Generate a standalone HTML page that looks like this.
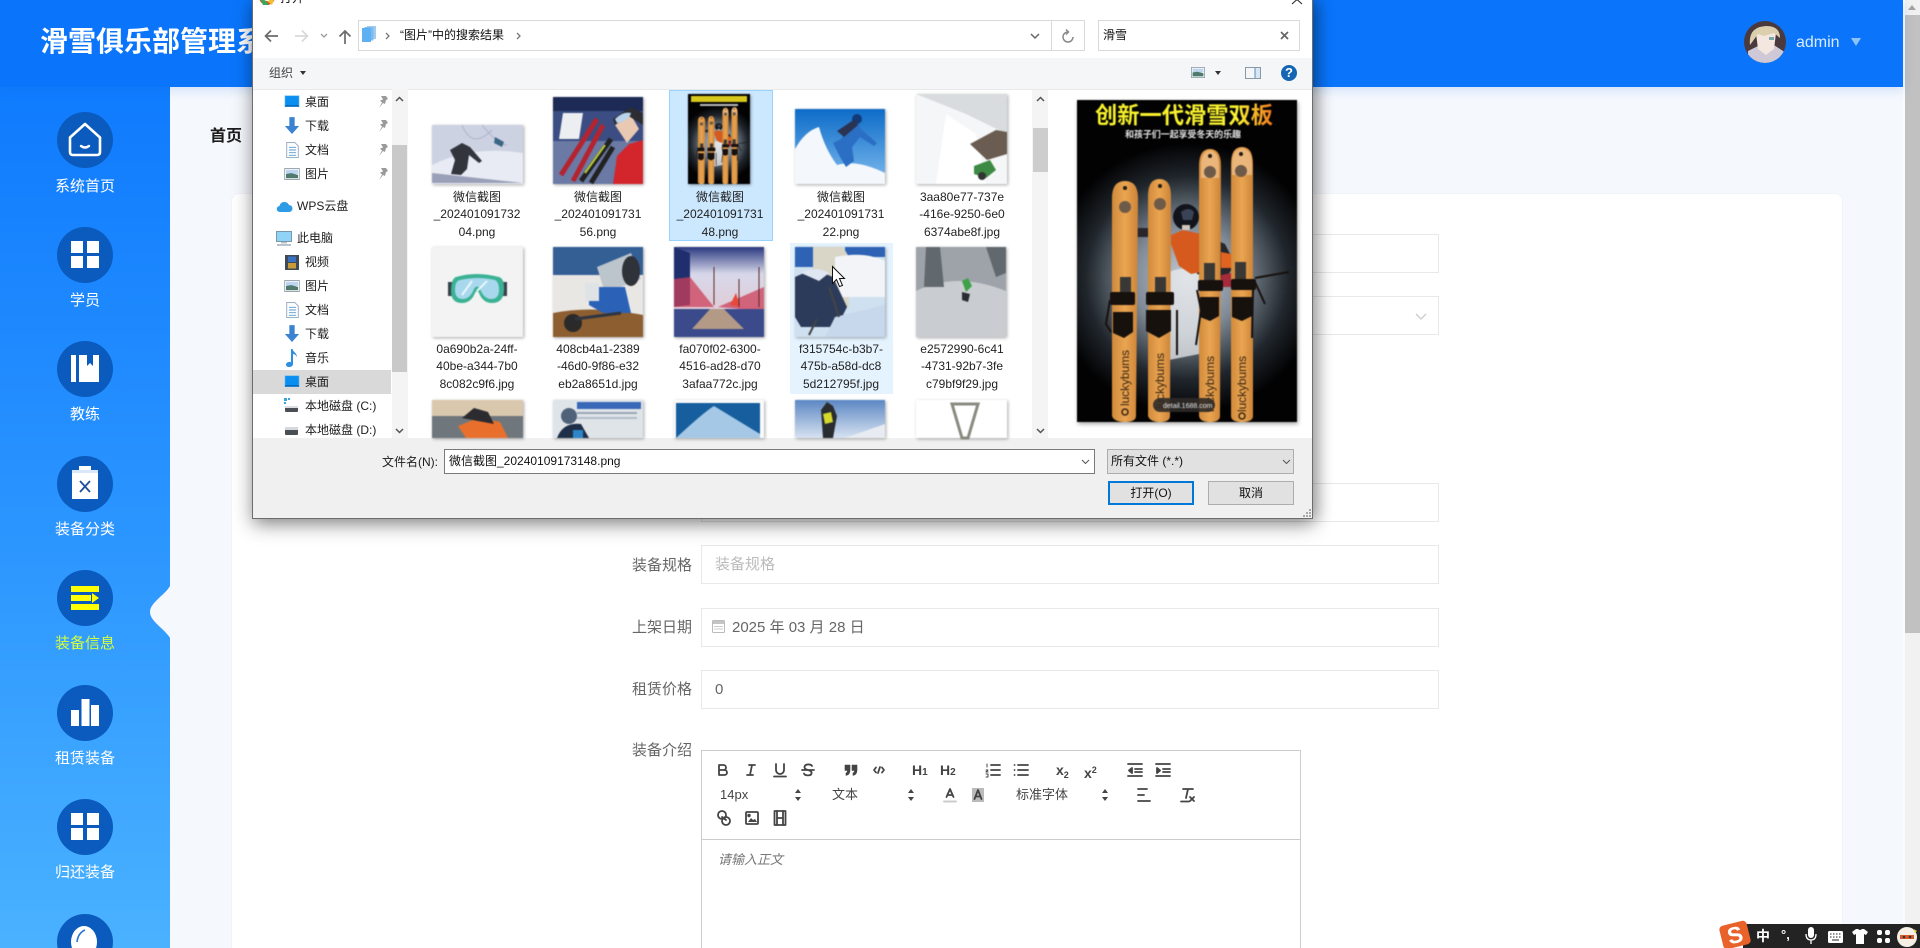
<!DOCTYPE html>
<html lang="zh-CN"><head><meta charset="utf-8"><title>滑雪俱乐部管理系统</title>
<style>
*{box-sizing:border-box}
html,body{margin:0;padding:0;width:1920px;height:948px;overflow:hidden;background:#f5f8fd;font-family:"Liberation Sans","Noto Sans CJK SC",sans-serif}
#root{position:relative;width:1920px;height:948px;overflow:hidden;background:#f5f8fd}
.a{position:absolute}
svg{display:block;overflow:visible}
.c{position:absolute;left:57px;width:56px;height:56px;border-radius:50%;background:#0a5bbd}
.l{position:absolute;left:0;width:170px;text-align:center;font-size:15px;line-height:20px;color:#fff}
.ip{position:absolute;left:701px;width:738px;height:39px;border:1px solid #e8e8e8;background:#fff;font-size:15px;line-height:38px;padding-left:13px;color:#666}
.lb{position:absolute;left:592px;width:100px;text-align:right;font-size:15px;line-height:20px;color:#666}
.i{position:absolute;width:18px;height:18px;fill:none;stroke:#444;stroke-width:1.8;stroke-linecap:round;stroke-linejoin:round}
.tb{position:absolute;font-size:13px;line-height:18px;color:#444}
#dlg{position:absolute;left:252px;top:-2px;width:1061px;height:521px;background:#fff;border:1px solid #6d6d6d;box-shadow:0 6px 18px rgba(0,0,0,.38),6px 0 14px rgba(0,0,0,.2);overflow:hidden;z-index:5}
#dlg .in{position:absolute;left:-253px;top:1px;width:1920px;height:948px}
.n{position:absolute;font-size:12px;line-height:24px;height:24px;color:#1c1c1c;white-space:nowrap}
.f{position:absolute;width:120px;text-align:center;font-size:12px;line-height:17.3px;color:#222}
.t{position:absolute;box-shadow:1px 1px 3px rgba(0,0,0,.35);filter:blur(.5px)}
.pin{position:absolute;left:378px;width:10px;height:12px;fill:#9a9a9a}
</style></head><body>
<div id="root">
<svg width="0" height="0" style="position:absolute"><defs>
<symbol id="grid" viewBox="0 0 28 28"><path fill="#fff" d="M0 0h12v12H0zM16 0h12v12H16zM0 15h12v12H0zM16 15h12v12H16z"/></symbol>
<symbol id="mon" viewBox="0 0 20 18"><rect x="1" y="1" width="18" height="14" fill="#0a8ef0" stroke="#6bb8ee" stroke-width=".8"/><rect x="1" y="13" width="18" height="2" fill="#0868b8"/></symbol>
<symbol id="dl" viewBox="0 0 18 20"><path fill="#3b82d0" d="M6 0h6v10h5l-8 9-8-9h5z"/></symbol>
<symbol id="doc" viewBox="0 0 14 18"><path fill="#fff" stroke="#8fa6bd" d="M.5.5h9l4 4v13H.5z"/><path stroke="#5a9bd0" d="M3 6h8M3 9h8M3 12h8M3 15h8"/></symbol>
<symbol id="pic" viewBox="0 0 18 14"><rect x=".5" y=".5" width="17" height="13" fill="#fff" stroke="#8d98a4"/><rect x="2" y="2" width="14" height="5" fill="#bdd5ee"/><path fill="#4d7a6d" d="M2 7l6-1 8 2v4H2z"/></symbol>
<symbol id="pinp" viewBox="0 0 10 12"><path d="M3 0h5l2 3-2 1-1 4-2-1-4 5 3-5.500-2-2 3-1z"/></symbol>
<symbol id="ud" viewBox="0 0 8 14"><path fill="#444" d="M4 1l3 4H1zM4 13L1 9h6z"/></symbol>
<radialGradient id="glow" gradientUnits="userSpaceOnUse" cx="110" cy="178" r="135"><stop offset="0" stop-color="#c5ccd4"/><stop offset=".4" stop-color="#7f8a96"/><stop offset=".75" stop-color="#20262c"/><stop offset="1" stop-color="#020203"/></radialGradient>
<linearGradient id="wood" x1="0" x2="1" y1="0" y2="0"><stop offset="0" stop-color="#d08a3c"/><stop offset=".5" stop-color="#eaa551"/><stop offset="1" stop-color="#cc8438"/></linearGradient>
<linearGradient id="ttl" x1="0" x2="1" y1="0" y2="0"><stop offset="0" stop-color="#f6f02a"/><stop offset=".8" stop-color="#f8f030"/><stop offset="1" stop-color="#f2761e"/></linearGradient>
<symbol id="skis" viewBox="0 0 220 322" preserveAspectRatio="none">
<rect width="220" height="322" fill="#030304"/><rect width="220" height="322" fill="url(#glow)"/>
<path fill="#e9ecef" opacity=".75" d="M92 172q18-8 36 2l2 40-8 40-30 6z"/>
<path fill="#26262c" d="M60 128h12v9H60zM122 132l26 12 10 20-10 16-28-6z"/>
<path fill="#d65a1e" d="M94 135l12-5 18 4v38l-10 2-12-8-8-22z"/><path fill="#e2621f" d="M144 152l10 2v14h-10z"/><path fill="#a52a3a" d="M144 175l10-2v14h-10z"/>
<circle cx="109" cy="117" r="13" fill="#12141c"/><path fill="#3a4356" d="M104 112q8-6 13 0l-2 8-9 0z"/><path fill="#cfc7be" d="M105 125h8v5h-8z"/>
<g fill="url(#wood)"><path d="M35 316V98q0-17 13-17t13 17l-2 218q0 6-11 6t-13-6z"/><path d="M71 316V96q0-17 11.500-17T94 96l-1 220q0 6-10 6t-12-6z"/><path d="M122 316V66q0-17 11-17t11 17l-1 250q0 6-10 6t-11-6z"/><path d="M154 316V64q0-17 11-17t11 17v252q0 6-11 6t-11-6z"/></g>
<g fill="#ecbb84" opacity=".85"><path d="M124 78V66q0-15 9-15t9 15v12zM155 75V64q0-15 10-15t10 15v11z"/></g>
<g fill="#6e5a48"><circle cx="48" cy="107" r="6"/><circle cx="83" cy="104" r="6"/><circle cx="133" cy="72" r="6"/><circle cx="164" cy="71" r="6"/></g>
<g fill="#221a14"><circle cx="48" cy="88" r="2"/><circle cx="83" cy="86" r="2"/><circle cx="133" cy="56" r="2"/><circle cx="164" cy="54" r="2"/></g>
<g fill="#3a3835"><rect x="43" y="177" width="11" height="16"/><rect x="78" y="177" width="11" height="16"/><rect x="127" y="163" width="11" height="17"/><rect x="158" y="162" width="11" height="17"/></g>
<g fill="#17110e"><rect x="33" y="192" width="25" height="13" rx="2"/><rect x="69" y="192" width="28" height="13" rx="2"/><rect x="121" y="180" width="25" height="11" rx="2"/><rect x="154" y="179" width="25" height="11" rx="2"/><path d="M36 212h20v20l-9 6-11-5zM69 210h25v21l-12 7-13-7zM123 197h19v19l-9 5-10-4zM155 197h20v19l-10 5-10-4z"/></g>
<g fill="none" stroke="#17110e" stroke-width="2"><path d="M33 200l-4 24 5 8M100 210v45M120 190l4 20-5 35M178 182l10 22M176 190l-1 48M178 178l34-6"/></g>
</symbol>
</defs></svg>

<!-- header -->
<div class="a" style="left:0;top:0;width:1903px;height:87px;background:#0a75fb;box-shadow:0 3px 10px rgba(30,110,230,.18);z-index:2"></div>
<div class="a" style="left:40px;top:20px;width:300px;height:44px;line-height:44px;font-size:28px;font-weight:700;color:#fff;white-space:nowrap;z-index:3">滑雪俱乐部管理系统</div>
<svg class="a" style="left:1744px;top:21px;z-index:3" width="42" height="42" viewBox="0 0 42 42"><defs><clipPath id="av"><circle cx="21" cy="21" r="21"/></clipPath></defs><g clip-path="url(#av)"><rect width="42" height="42" fill="#4a3a3e"/><path fill="#cfc8d6" d="M4 30l12-6 14 0 12 8v10H4z"/><path fill="#f4e7e0" d="M12 12h20l-2 16-8 6-8-6z"/><path fill="#dccfae" d="M6 24Q4 6 22 5q14 0 14 12l-6-5-10 3-6-2z"/><path fill="#7ba9a8" d="M25 16h5v3h-5z"/></g></svg>
<div class="a" style="left:1796px;top:31px;font-size:16px;line-height:24px;color:#d9ecff;z-index:3">admin</div>
<div class="a" style="left:1851px;top:38px;width:0;height:0;border-left:5.500px solid transparent;border-right:5.500px solid transparent;border-top:8px solid #8fc2fb;z-index:3"></div>

<!-- sidebar -->
<div class="a" style="left:0;top:87px;width:170px;height:861px;background:linear-gradient(#0f7bfe,#2a94ff 50%,#4ab2ff)"></div>
<svg class="a" style="left:145px;top:580px;z-index:1" width="26" height="65" viewBox="0 0 26 65"><path fill="#f5f8fd" d="M26 4C22 14 5 22 5 32S22 50 26 60z"/></svg>
<div class="c" style="top:112px"></div>
<svg class="a" style="left:68px;top:122px" width="34" height="35" viewBox="0 0 34 35"><path fill="none" stroke="#fff" stroke-width="2.600" stroke-linejoin="round" d="M2 15.500L17 2l15 13.500V30q0 3-3 3H5q-3 0-3-3z"/><path fill="none" stroke="#fff" stroke-width="2.400" stroke-linecap="round" d="M13 24q4 3 8 0"/></svg>
<div class="l" style="top:177px">系统首页</div>
<div class="c" style="top:227px"></div><svg class="a" style="left:71px;top:241px" width="28" height="28"><use href="#grid"/></svg>
<div class="l" style="top:291px">学员</div>
<div class="c" style="top:341px"></div>
<svg class="a" style="left:71px;top:355px" width="28" height="27" viewBox="0 0 28 27"><path fill="#fff" d="M0 0h5v27H0zM8 0h8v11l3-3 3 3V0h6v27H8z"/></svg>
<div class="l" style="top:405px">教练</div>
<div class="c" style="top:456px"></div>
<svg class="a" style="left:72px;top:466px" width="26" height="33" viewBox="0 0 26 33"><path fill="#fff" d="M0 4h7V0h12v4h7v29H0z"/><path fill="#dbe7fb" d="M0 4h26v3H0z"/><path fill="none" stroke="#1f4f9a" stroke-width="1.800" d="M8 15l10 11M18 15L8 26"/></svg>
<div class="l" style="top:520px">装备分类</div>
<div class="c" style="top:570px"></div>
<svg class="a" style="left:71px;top:586px" width="28" height="24" viewBox="0 0 28 24"><path fill="#ff0" d="M0 0h28v6H0zM0 9h20v6H0zM21 7l7 5-7 5zM0 18h28v6H0z"/></svg>
<div class="l" style="top:634px;color:#d4ff3c">装备信息</div>
<div class="c" style="top:685px"></div>
<svg class="a" style="left:71px;top:699px" width="28" height="27" viewBox="0 0 28 27"><path fill="#fff" d="M0 11h8v16H0zM10.500 0h8v27h-8zM20 6h8v21h-8z"/></svg>
<div class="l" style="top:749px">租赁装备</div>
<div class="c" style="top:799px"></div><svg class="a" style="left:71px;top:813px" width="28" height="28"><use href="#grid"/></svg>
<div class="l" style="top:863px">归还装备</div>
<div class="c" style="top:914px"></div>
<svg class="a" style="left:71px;top:926px" width="26" height="22" viewBox="0 0 26 22"><ellipse cx="13" cy="16" rx="13" ry="16" fill="#fff"/><path fill="none" stroke="#2a74d0" stroke-width="1.600" d="M6 16Q7 7 14 4"/></svg>

<!-- page -->
<div class="a" style="left:210px;top:126px;font-size:16px;font-weight:700;line-height:22px;color:#1c1c1c">首页</div>
<div class="a" style="left:231px;top:193px;width:1612px;height:780px;background:#fff;border:1px solid #f0f3f8;border-radius:8px"></div>
<div class="ip" style="top:234px"></div>
<div class="ip" style="top:296px"></div>
<svg class="a" style="left:1415px;top:313px" width="12" height="8"><path fill="none" stroke="#ccc" stroke-width="1.300" d="M1 1l5 5 5-5"/></svg>
<div class="ip" style="top:483px"></div>
<div class="lb" style="top:556px">装备规格</div>
<div class="ip" style="top:545px;color:#bbb">装备规格</div>
<div class="lb" style="top:618px">上架日期</div>
<div class="ip" style="top:608px;padding-left:30px">2025 年 03 月 28 日</div>
<svg class="a" style="left:712px;top:620px" width="13" height="13" viewBox="0 0 13 13"><rect x=".5" y=".5" width="12" height="12" rx="1" fill="#fff" stroke="#bbb"/><path fill="#c4c4c4" d="M1 1h11v3H1z"/><path stroke="#ccc" d="M2 6.500h9M2 9h9"/></svg>
<div class="lb" style="top:680px">租赁价格</div>
<div class="ip" style="top:670px">0</div>
<div class="lb" style="top:741px">装备介绍</div>
<div class="a" style="left:701px;top:750px;width:600px;height:210px;border:1px solid #ccc;background:#fff"></div>
<div class="a" style="left:701px;top:839px;width:600px;height:1px;background:#ccc"></div>
<div class="a" style="left:718px;top:850px;font-size:13px;line-height:20px;font-style:italic;color:#777">请输入正文</div>

<!-- editor toolbar -->
<svg class="i" style="left:714px;top:761px" viewBox="0 0 18 18"><path d="M5 4h4.500a2.500 2.500 0 0 1 0 5H5zM5 9h5.500a2.500 2.500 0 0 1 0 5H5z"/></svg>
<svg class="i" style="left:742px;top:761px" viewBox="0 0 18 18"><path d="M7 4h6M5 14h6M10 4l-2 10"/></svg>
<svg class="i" style="left:771px;top:761px" viewBox="0 0 18 18"><path d="M5 3v6a4 4 0 0 0 8 0V3M3 15.500h12"/></svg>
<svg class="i" style="left:799px;top:761px" viewBox="0 0 18 18"><path d="M13 5C12 3 6 2.500 5.500 6 5.200 8 7.500 8.500 9 9c2 .6 4 1.200 3.500 3.500C12 15 6 15 5 12.500M3 9h12"/></svg>
<svg class="i" style="left:842px;top:761px;fill:#444;stroke-width:.6" viewBox="0 0 18 18"><path d="M3 4h5v5c0 3-1.500 5-4 5.500V12c1-.3 1.500-1 1.500-2.500H3zM10 4h5v5c0 3-1.500 5-4 5.500V12c1-.3 1.500-1 1.500-2.500H10z"/></svg>
<svg class="i" style="left:870px;top:761px" viewBox="0 0 18 18"><path d="M6 6.500L4 9l2 2.500M12 6.500L14 9l-2 2.500M10 6l-2 6"/></svg>
<div class="tb" style="left:912px;top:761px;font-size:14px;font-weight:700">H<span style="font-size:10px">1</span></div>
<div class="tb" style="left:940px;top:761px;font-size:14px;font-weight:700">H<span style="font-size:10px">2</span></div>
<svg class="i" style="left:984px;top:761px" viewBox="0 0 18 18"><path d="M7 4h9M7 9h9M7 14h9"/><path stroke-width="1" d="M3 3v3M2 9h2l-2 2h2M2 13h2v3H2"/></svg>
<svg class="i" style="left:1012px;top:761px" viewBox="0 0 18 18"><path d="M6 4h10M6 9h10M6 14h10M2.500 4h.1M2.500 9h.1M2.500 14h.1"/></svg>
<div class="tb" style="left:1056px;top:761px;font-size:14px;font-weight:700">x<span style="font-size:9px;vertical-align:-3px">2</span></div>
<div class="tb" style="left:1084px;top:761px;font-size:14px;font-weight:700">x<span style="font-size:9px;vertical-align:5px">2</span></div>
<svg class="i" style="left:1126px;top:761px" viewBox="0 0 18 18"><path d="M2 3h14M9 8h7M9 11h7M2 15h14"/><path fill="#444" d="M6 7L3 9.500 6 12z"/></svg>
<svg class="i" style="left:1154px;top:761px" viewBox="0 0 18 18"><path d="M2 3h14M9 8h7M9 11h7M2 15h14"/><path fill="#444" d="M3 7l3 2.500L3 12z"/></svg>
<div class="tb" style="left:720px;top:786px;font-size:13px">14px</div>
<svg class="a" style="left:794px;top:788px" width="8" height="14"><use href="#ud"/></svg>
<div class="tb" style="left:832px;top:786px">文本</div>
<svg class="a" style="left:907px;top:788px" width="8" height="14"><use href="#ud"/></svg>
<svg class="i" style="left:941px;top:786px" viewBox="0 0 18 18"><path d="M5.500 11L9 3l3.500 8M6.500 9h5"/><path stroke="#ccc" stroke-width="2" d="M3 15.500h12" /></svg>
<svg class="i" style="left:969px;top:786px" viewBox="0 0 18 18"><rect x="3" y="2" width="12" height="14" fill="#bbb" stroke="none"/><path d="M5.500 13L9 4l3.500 9M6.500 10.500h5"/></svg>
<div class="tb" style="left:1016px;top:786px">标准字体</div>
<svg class="a" style="left:1101px;top:788px" width="8" height="14"><use href="#ud"/></svg>
<svg class="i" style="left:1135px;top:786px" viewBox="0 0 18 18"><path d="M3 3h9M3 9h6M3 15h12"/></svg>
<svg class="i" style="left:1178px;top:786px" viewBox="0 0 18 18"><path d="M5 3h10M10 3L8 12M3 15.500h8M12 11l4 4M16 11l-4 4"/></svg>
<svg class="i" style="left:715px;top:809px" viewBox="0 0 18 18"><circle cx="7" cy="6" r="4"/><circle cx="11" cy="12" r="4"/><path d="M7 8l4 3"/></svg>
<svg class="i" style="left:743px;top:809px" viewBox="0 0 18 18"><rect x="3" y="3" width="12" height="12" rx="1"/><path fill="#444" stroke="none" d="M5 13l3-4 2 2 2-1 2 3z"/><circle cx="6" cy="6.500" r=".8" fill="#444"/></svg>
<svg class="i" style="left:771px;top:809px" viewBox="0 0 18 18"><rect x="3.500" y="2" width="11" height="14"/><path d="M6 2v14M12 2v14M6 9h6"/></svg>

<!-- scrollbar -->
<div class="a" style="left:1905px;top:0;width:15px;height:948px;background:#f1f1f1"></div>
<div class="a" style="left:1903px;top:0;width:2px;height:948px;background:#fafbfe"></div>
<div class="a" style="left:1905px;top:15px;width:15px;height:618px;background:#c1c1c1"></div>
<div class="a" style="left:1908px;top:5px;width:0;height:0;border-left:4.500px solid transparent;border-right:4.500px solid transparent;border-bottom:5px solid #a3a3a3"></div>

<!-- dialog -->
<div id="dlg"><div class="in">
<div class="a" style="left:253px;top:58px;width:1060px;height:31px;background:#f5f6f7"></div>
<div class="a" style="left:253px;top:89px;width:1060px;height:1px;background:#e9e9e9"></div>
<!-- title -->
<svg class="a" style="left:259px;top:-11px" width="16" height="16" viewBox="0 0 16 16"><circle cx="8" cy="8" r="8" fill="#e04a35"/><path fill="#f6c02d" d="M8 4h7l1 4-3 8-5-4z"/><path fill="#3aa757" d="M0 8l4 8h6l-3-4z"/><circle cx="8" cy="8" r="3.500" fill="#4a8ef0" stroke="#fff"/></svg>
<div class="a" style="left:280px;top:-9px;font-size:12px;line-height:14px;color:#111">打开</div>
<svg class="a" style="left:1292px;top:-5px" width="11" height="10"><path fill="none" stroke="#222" d="M0 0l10 9M10 0L0 9"/></svg>
<!-- nav bar -->
<svg class="a" style="left:264px;top:29px" width="15" height="14" viewBox="0 0 15 14"><path fill="none" stroke="#6b6b6b" stroke-width="1.700" d="M14 7H2M7 1.500L1.500 7 7 12.500"/></svg>
<svg class="a" style="left:294px;top:29px" width="15" height="14" viewBox="0 0 15 14"><path fill="none" stroke="#d9d9d9" stroke-width="1.700" d="M1 7h12M8 1.500L13.500 7 8 12.500"/></svg>
<svg class="a" style="left:320px;top:33px" width="8" height="6"><path fill="none" stroke="#9a9a9a" stroke-width="1.300" d="M1 1l3 3 3-3"/></svg>
<svg class="a" style="left:338px;top:29px" width="14" height="15" viewBox="0 0 14 15"><path fill="none" stroke="#6b6b6b" stroke-width="1.700" d="M7 15V2M1.500 7.500L7 2l5.500 5.500"/></svg>
<div class="a" style="left:358px;top:20px;width:727px;height:31px;border:1px solid #d9d9d9;background:#fff"></div>
<div class="a" style="left:1051px;top:20px;width:1px;height:31px;background:#d9d9d9"></div>
<svg class="a" style="left:362px;top:26px" width="14" height="16" viewBox="0 0 14 16"><rect x="5" y="0" width="9" height="13" fill="#a3cbee"/><rect x="2.500" y="1" width="9" height="13.500" fill="#7dbcf0"/><rect x="0" y="2" width="9" height="14" fill="#5fb0f2"/></svg>
<svg class="a" style="left:385px;top:32px" width="5" height="8"><path fill="none" stroke="#777" stroke-width="1.300" d="M1 1l3 3-3 3"/></svg>
<div class="a" style="left:400px;top:25px;font-size:12px;line-height:20px;color:#111;white-space:nowrap">“图片”中的搜索结果</div>
<svg class="a" style="left:516px;top:32px" width="5" height="8"><path fill="none" stroke="#777" stroke-width="1.300" d="M1 1l3 3-3 3"/></svg>
<svg class="a" style="left:1030px;top:33px" width="10" height="7"><path fill="none" stroke="#666" stroke-width="1.500" d="M1 1l4 4 4-4"/></svg>
<svg class="a" style="left:1062px;top:29px" width="12" height="14" viewBox="0 0 12 14"><path fill="none" stroke="#8a8a8a" stroke-width="1.500" d="M6 3a5 5 0 1 0 5 5M4 .5l2.500 2.500L4 5.500"/></svg>
<div class="a" style="left:1098px;top:20px;width:202px;height:31px;border:1px solid #d9d9d9;background:#fff"></div>
<div class="a" style="left:1103px;top:24px;font-size:12px;line-height:22px;color:#111">滑雪</div>
<svg class="a" style="left:1280px;top:31px" width="9" height="9"><path fill="none" stroke="#666" stroke-width="1.700" d="M1 1l7 7M8 1L1 8"/></svg>
<!-- toolbar -->
<div class="a" style="left:269px;top:63px;font-size:12px;line-height:20px;color:#444">组织</div>
<div class="a" style="left:300px;top:71px;width:0;height:0;border-left:3.500px solid transparent;border-right:3.500px solid transparent;border-top:4px solid #333"></div>
<svg class="a" style="left:1191px;top:67px" width="14" height="11"><use href="#pic"/></svg>
<div class="a" style="left:1215px;top:71px;width:0;height:0;border-left:3.500px solid transparent;border-right:3.500px solid transparent;border-top:4px solid #333"></div>
<svg class="a" style="left:1245px;top:67px" width="16" height="12" viewBox="0 0 16 12"><rect x=".5" y=".5" width="15" height="11" fill="#f5f6f7" stroke="#8b99a6"/><rect x="10" y="1" width="5" height="10" fill="#d7e6f5"/><path stroke="#5a8bb8" d="M10 1v10"/></svg>
<div class="a" style="left:1281px;top:65px;width:16px;height:16px;border-radius:50%;background:#1565b5;color:#fff;font-size:13px;font-weight:700;line-height:16px;text-align:center">?</div>

<!-- nav pane -->
<div class="a" style="left:253px;top:370px;width:138px;height:24px;background:#d9d9d9"></div>
<svg class="a" style="left:284px;top:95px" width="16" height="14"><use href="#mon"/></svg><div class="n" style="left:305px;top:90px">桌面</div>
<svg class="a" style="left:284px;top:117px" width="16" height="18"><use href="#dl"/></svg><div class="n" style="left:305px;top:114px">下载</div>
<svg class="a" style="left:286px;top:142px" width="13" height="16"><use href="#doc"/></svg><div class="n" style="left:305px;top:138px">文档</div>
<svg class="a" style="left:284px;top:168px" width="16" height="12"><use href="#pic"/></svg><div class="n" style="left:305px;top:162px">图片</div>
<svg class="pin" style="top:96px;left:378px"><use href="#pinp"/></svg><svg class="pin" style="top:120px"><use href="#pinp"/></svg><svg class="pin" style="top:144px"><use href="#pinp"/></svg><svg class="pin" style="top:168px"><use href="#pinp"/></svg>
<svg class="a" style="left:277px;top:200px" width="15" height="12" viewBox="0 0 15 12"><path fill="#2e9be6" d="M3 12a3 3 0 0 1-.5-6A5 5 0 0 1 12 5a3.500 3.500 0 0 1 0 7z"/></svg><div class="n" style="left:297px;top:194px">WPS云盘</div>
<svg class="a" style="left:276px;top:231px" width="16" height="15" viewBox="0 0 16 15"><rect x=".5" y=".5" width="15" height="10" fill="#8fd4f7" stroke="#7a96a8"/><path fill="#b9c3cc" d="M5 11h6v1.500H5zM1 13h14v2H1z"/></svg><div class="n" style="left:297px;top:226px">此电脑</div>
<svg class="a" style="left:285px;top:255px" width="14" height="15" viewBox="0 0 14 15"><rect width="14" height="15" fill="#3f4a57"/><rect x="3" y="1.500" width="8" height="5.500" fill="#3a70c0"/><rect x="3" y="8" width="8" height="5.500" fill="#c79a3a"/></svg><div class="n" style="left:305px;top:250px">视频</div>
<svg class="a" style="left:284px;top:280px" width="16" height="12"><use href="#pic"/></svg><div class="n" style="left:305px;top:274px">图片</div>
<svg class="a" style="left:286px;top:302px" width="13" height="16"><use href="#doc"/></svg><div class="n" style="left:305px;top:298px">文档</div>
<svg class="a" style="left:284px;top:325px" width="16" height="18"><use href="#dl"/></svg><div class="n" style="left:305px;top:322px">下载</div>
<svg class="a" style="left:286px;top:349px" width="12" height="18" viewBox="0 0 12 18"><path fill="#2c8fe0" d="M5 0h1.500c.5 3 4.500 4 4.500 8-1-2-2.500-3-4-3v10c0 2-2 3-4 3s-3-1-3-2.500S2 12.500 5 13z"/></svg><div class="n" style="left:305px;top:346px">音乐</div>
<svg class="a" style="left:284px;top:375px" width="16" height="14"><use href="#mon"/></svg><div class="n" style="left:305px;top:370px">桌面</div>
<svg class="a" style="left:284px;top:398px" width="15" height="15" viewBox="0 0 15 15"><path fill="#38a3e0" d="M0 0h3v3H0zM4 0h2v2H4zM0 4h2v2H0z"/><rect x="1" y="9" width="13" height="5" rx="1" fill="#4a4f55"/><rect x="1" y="8" width="13" height="2" fill="#dcdfe3"/></svg><div class="n" style="left:305px;top:394px">本地磁盘 (C:)</div>
<svg class="a" style="left:285px;top:426px" width="14" height="10" viewBox="0 0 14 10"><rect x="0" y="3" width="13" height="6" rx="1" fill="#4a4f55"/><rect x="0" y="1" width="13" height="3" fill="#d5d8dc"/></svg><div class="n" style="left:305px;top:418px">本地磁盘 (D:)</div>
<div class="a" style="left:253px;top:438px;width:1060px;height:82px;background:#f0f0f0"></div>
<div class="a" style="left:392px;top:89px;width:16px;height:349px;background:#f4f4f4"></div>
<div class="a" style="left:392px;top:145px;width:15px;height:227px;background:#c9c9c9"></div>
<svg class="a" style="left:395px;top:96px" width="9" height="7"><path fill="none" stroke="#555" stroke-width="1.500" d="M1 5l3.500-3.500L8 5"/></svg>
<svg class="a" style="left:395px;top:427px" width="9" height="7"><path fill="none" stroke="#555" stroke-width="1.500" d="M1 2l3.500 3.500L8 2"/></svg>

<!-- selection / hover -->
<div class="a" style="left:669px;top:90px;width:104px;height:151px;background:#cce8ff;border:1px solid #99d1ff"></div>
<div class="a" style="left:790px;top:243px;width:103px;height:151px;background:#e5f3ff"></div>

<!-- thumbs row1 -->
<svg class="t" style="left:432px;top:125px" width="91" height="59" viewBox="0 0 91 59"><rect width="91" height="59" fill="#cdd2e2"/><path fill="#e8ebf3" d="M0 40Q40 20 91 28v31H0z"/><path fill="none" stroke="#aeb4cb" d="M30 0q10 25 30 5M50 0q16 20 25 20"/><path fill="#33353d" d="M18 25l12-7 8 4 12 14-3 2-10-8-2 14-6 6-10-1 4-14z"/><path fill="#3a6684" d="M63 12l9 5-2 5-8-4z"/><path fill="#9aa0b8" d="M0 48L91 58H0z"/></svg>
<svg class="t" style="left:553px;top:97px" width="90" height="87" viewBox="0 0 90 87"><rect width="90" height="87" fill="#6a7aa5"/><rect width="90" height="14" fill="#1c2a55"/><rect y="14" width="90" height="30" fill="#3b4d82"/><path fill="#eceef2" d="M10 16h20l-4 26H6z"/><path fill="#d3262c" d="M60 87l4-28 12-12 14-4v44z"/><path fill="#e9c9b2" d="M62 28l16-10 8 14-12 14z"/><path fill="#2b2d33" d="M60 22l18-12 12 6v12l-16-10-12 10z"/><path fill="#b9d4ec" d="M62 22q8-8 16-6-2 8-14 10z"/><path stroke="#b32430" stroke-width="5" d="M8 78L44 22M20 84L50 28"/><path stroke="#222" stroke-width="5" d="M28 84L58 42M38 86L60 50"/><path stroke="#b8c92c" stroke-width="2" d="M32 76L52 48"/></svg>
<div class="a" style="left:688px;top:94px;width:62px;height:90px;box-shadow:1px 1px 3px rgba(0,0,0,.35);filter:blur(.4px)"><svg width="62" height="90"><use href="#skis" width="62" height="90"/><rect x="3" y="2" width="56" height="6" fill="#d8c81c"/><rect x="12" y="10" width="38" height="2" fill="#bbb"/></svg></div>
<svg class="t" style="left:795px;top:109px" width="90" height="75" viewBox="0 0 90 75"><defs><linearGradient id="sk" x1="0" y1="0" x2="0" y2="1"><stop offset="0" stop-color="#0d6cc8"/><stop offset="1" stop-color="#7fbbee"/></linearGradient></defs><rect width="90" height="75" fill="url(#sk)"/><path fill="#f4f8fc" d="M0 40q10-18 24-22 6 22 18 38 20-6 48 8v11H0z"/><path fill="#2a6fc4" d="M38 34l8-4 10-14 6-4 4 8 16 14-3 3-14-9-8 10 2 14-8 6-6-10z"/><circle cx="62" cy="10" r="5" fill="#123a7a"/><path fill="#2a3352" d="M42 22l18-12 3 6-14 12z"/></svg>
<svg class="t" style="left:916px;top:94px" width="91" height="90" viewBox="0 0 91 90"><rect width="91" height="90" fill="#f5f6f7"/><path fill="#d9dcde" d="M0 0h91v40L50 20z"/><path fill="#fff" d="M20 90L30 20l30 20 10 50z"/><path fill="#6a5c50" d="M54 50l26-14 11 2v22l-20 6z"/><path fill="#3d8a45" d="M58 72l16-6 6 10-10 8-12-4z"/><circle cx="66" cy="82" r="4" fill="#333"/></svg>
<!-- row2 -->
<svg class="t" style="left:432px;top:247px" width="91" height="90" viewBox="0 0 91 90"><rect width="91" height="90" fill="#f3f3f3"/><path fill="#38404a" d="M16 35h6v14h-6zM69 35h6v14h-6z"/><path fill="#3bb294" d="M24 30q20-6 43 0 6 2 5 14-1 12-12 12-9 0-13-10-2-4-4 0-4 10-13 10-11 0-11-12 0-12 5-14z"/><path fill="#a8d8ee" d="M28 33q18-4 35 0 4 2 4 10 0 9-8 9-7 0-11-10-3-5-6 0-4 10-11 10-8 0-8-9t5-10z"/><path stroke="#eaf6fb" stroke-width="2" d="M40 34l-10 14M55 34l-10 10"/></svg>
<svg class="t" style="left:553px;top:247px" width="90" height="90" viewBox="0 0 90 90"><rect width="90" height="90" fill="#345f95"/><rect y="28" width="90" height="62" fill="#e8e7e4"/><path fill="#8d5e30" d="M0 66q40-8 90 2v22H0z"/><path fill="#bcc4cc" d="M44 20L78 6l10 26-36 14z"/><ellipse cx="78" cy="24" rx="9" ry="15" fill="#30323a"/><path fill="#2b62b8" d="M36 40h36l6 26H50l-14-8z"/><path fill="#dfe3e6" d="M32 36h14v18H32z"/><circle cx="20" cy="76" r="9" fill="#2a2a2a"/><path stroke="#2f3540" stroke-width="3" d="M22 72l46-6"/></svg>
<svg class="t" style="left:674px;top:247px" width="90" height="90" viewBox="0 0 90 90"><defs><linearGradient id="r2" x1="0" y1="0" x2="0" y2="1"><stop offset="0" stop-color="#2a3a80"/><stop offset=".3" stop-color="#d8d8ea"/><stop offset="1" stop-color="#e7c2c8"/></linearGradient></defs><rect width="90" height="90" fill="url(#r2)"/><path fill="#1f2f6e" d="M0 0l16 6v52L0 60z"/><path fill="#cc3f5a" d="M16 30l24 30H0v-28zM44 60l46-20v24z" opacity=".75"/><path fill="#3a4a8a" d="M0 62h90v28H0z"/><path fill="#b39a86" d="M18 82l18-20h14l20 20z"/><path fill="#e74a3a" d="M56 58l6-12 4 14z"/><path stroke="#5e2a2a" d="M85 20v40M65 32v28M40 20v38"/></svg>
<svg class="t" style="left:795px;top:247px" width="90" height="90" viewBox="0 0 90 90"><rect width="90" height="90" fill="#cfe0f0"/><path fill="#2d62b4" d="M0 0h18v20H0zM50 0h40v10H50z"/><path fill="#d9d6c8" d="M18 0h30l6 10v50H18z"/><path fill="#f2f4f7" d="M40 10q30-6 50 4v36H40z"/><path fill="#2d3b5a" d="M0 30l18-8 20 8 14 30-10 20H6L0 70z"/><path fill="#dfe7f2" d="M6 26q14-8 28 0l-10 8z"/><path fill="#c7d8ec" d="M40 70l50-12v32H30z"/><path stroke="#444" stroke-width="2" d="M34 40l10 30M22 72l-8 16"/></svg>
<svg class="t" style="left:916px;top:247px" width="90" height="90" viewBox="0 0 90 90"><rect width="90" height="90" fill="#9da3a8"/><path fill="#c9cdd1" d="M0 44q40-20 90 0v46H0z"/><path fill="#62696e" d="M70 0h20v26l-10 4zM10 0h14l4 40H8z"/><path fill="#3fa148" d="M46 34l6-3 4 8-6 6z"/><path fill="#2a2d30" d="M46 45l8 2-2 8-6-2z"/></svg>
<!-- row3 -->
<svg class="t" style="left:432px;top:400px" width="91" height="38" viewBox="0 0 91 38"><rect width="91" height="38" fill="#d9c8ad"/><rect y="16" width="91" height="22" fill="#6f777d"/><path fill="#e9702c" d="M26 26l20-8 22 4 8 16H34z"/><path fill="#2b2b30" d="M30 18l12-10 14 4 6 12z"/></svg>
<svg class="t" style="left:553px;top:400px" width="90" height="38" viewBox="0 0 90 38"><rect width="90" height="38" fill="#dfe4e9"/><rect x="24" y="2" width="64" height="7" fill="#3a68b8"/><rect x="24" y="12" width="60" height="2" fill="#9aa6b5"/><rect x="24" y="17" width="60" height="2" fill="#b3bcc8"/><circle cx="16" cy="16" r="8" fill="#50627a"/><path fill="#1f2f48" d="M4 38q6-16 24-14l8 14z"/><path fill="#2c86c8" d="M20 30h10v8H20z"/></svg>
<svg class="t" style="left:674px;top:400px" width="90" height="38" viewBox="0 0 90 38"><rect width="90" height="38" fill="#fafafa"/><rect x="2" y="3" width="84" height="35" fill="#175e9e"/><path fill="#a5c8e6" d="M2 38Q30 12 40 6l46 28v4z"/></svg>
<svg class="t" style="left:795px;top:400px" width="90" height="38" viewBox="0 0 90 38"><defs><linearGradient id="r3" x1="0" y1="0" x2="0" y2="1"><stop offset="0" stop-color="#5c87c4"/><stop offset="1" stop-color="#d7e2f1"/></linearGradient></defs><rect width="90" height="38" fill="url(#r3)"/><path fill="#e8ebf1" d="M50 38l40-14v14z"/><path fill="#2a2d30" d="M26 10l6-8 6 4 4 10-4 22H28z"/><path fill="#d6d82c" d="M28 14l8-2 2 10-8 2z"/></svg>
<svg class="t" style="left:916px;top:400px" width="91" height="38" viewBox="0 0 91 38"><rect width="91" height="38" fill="#fff"/><path fill="none" stroke="#8a8a80" stroke-width="3" d="M36 4h26L52 38H46z"/></svg>

<!-- file labels -->
<div class="f" style="left:417px;top:189px">微信截图<br>_202401091732<br>04.png</div>
<div class="f" style="left:538px;top:189px">微信截图<br>_202401091731<br>56.png</div>
<div class="f" style="left:660px;top:189px">微信截图<br>_202401091731<br>48.png</div>
<div class="f" style="left:781px;top:189px">微信截图<br>_202401091731<br>22.png</div>
<div class="f" style="left:902px;top:189px">3aa80e77-737e<br>-416e-9250-6e0<br>6374abe8f.jpg</div>
<div class="f" style="left:417px;top:341px">0a690b2a-24ff-<br>40be-a344-7b0<br>8c082c9f6.jpg</div>
<div class="f" style="left:538px;top:341px">408cb4a1-2389<br>-46d0-9f86-e32<br>eb2a8651d.jpg</div>
<div class="f" style="left:660px;top:341px">fa070f02-6300-<br>4516-ad28-d70<br>3afaa772c.jpg</div>
<div class="f" style="left:781px;top:341px">f315754c-b3b7-<br>475b-a58d-dc8<br>5d212795f.jpg</div>
<div class="f" style="left:902px;top:341px">e2572990-6c41<br>-4731-92b7-3fe<br>c79bf9f29.jpg</div>

<!-- list scrollbar -->
<div class="a" style="left:1032px;top:90px;width:16px;height:348px;background:#f4f4f4"></div>
<div class="a" style="left:1033px;top:128px;width:15px;height:44px;background:#cdcdcd"></div>
<svg class="a" style="left:1036px;top:96px" width="9" height="7"><path fill="none" stroke="#555" stroke-width="1.500" d="M1 5l3.500-3.500L8 5"/></svg>
<svg class="a" style="left:1036px;top:427px" width="9" height="7"><path fill="none" stroke="#555" stroke-width="1.500" d="M1 2l3.500 3.500L8 2"/></svg>

<!-- preview -->
<div class="a" style="left:1077px;top:100px;width:220px;height:322px;box-shadow:1px 2px 4px rgba(0,0,0,.35);filter:blur(.4px)">
<svg width="220" height="322" viewBox="0 0 220 322"><use href="#skis" width="220" height="322"/>
<text x="18" y="23" textLength="178" lengthAdjust="spacingAndGlyphs" font-size="23" font-weight="700" fill="url(#ttl)" font-family="Noto Sans CJK SC,sans-serif">创新一代滑雪双板</text>
<text x="48" y="37.500" textLength="116" font-size="9" font-weight="700" fill="#e0e0e0" font-family="Noto Sans CJK SC,sans-serif">和孩子们一起享受冬天的乐趣</text>
<g font-family="Liberation Sans,sans-serif" font-size="12" fill="#3a2510"><text transform="translate(52 306) rotate(-90)" textLength="56">luckybums</text><text transform="translate(87 309) rotate(-90)" textLength="56">luckybums</text><text transform="translate(137 312) rotate(-90)" textLength="56">luckybums</text><text transform="translate(169 312) rotate(-90)" textLength="56">luckybums</text></g>
<g fill="none" stroke="#3a2510" stroke-width="1.500"><circle cx="48" cy="312" r="3"/><circle cx="165" cy="316" r="3"/></g>
<rect x="76" y="298" width="62" height="14" rx="7" fill="#2e2a28" opacity=".9"/><text x="86" y="308" font-size="7" fill="#e8e8e8" font-family="Liberation Sans,sans-serif">detail.1688.com</text></svg>
</div>

<!-- cursor -->
<svg class="a" style="left:832px;top:266px;z-index:3" width="13" height="21" viewBox="0 0 13 21"><path fill="#fff" stroke="#111" d="M.5.500v17l4-4 3 7 3-1-3-7h5z"/></svg>

<!-- bottom -->
<div class="a" style="left:382px;top:452px;font-size:12px;line-height:20px;color:#1c1c1c;white-space:nowrap">文件名(N):</div>
<div class="a" style="left:444px;top:449px;width:651px;height:25px;border:1px solid #7a7a7a;background:#fff;font-size:12px;line-height:23px;padding-left:4px;color:#111;white-space:nowrap">微信截图_20240109173148.png</div>
<svg class="a" style="left:1081px;top:459px" width="9" height="6"><path fill="none" stroke="#555" d="M1 1l3.500 3.500L8 1"/></svg>
<div class="a" style="left:1107px;top:449px;width:187px;height:25px;border:1px solid #adadad;background:#e1e1e1;font-size:12px;line-height:23px;padding-left:3px;color:#111;white-space:nowrap">所有文件 (*.*)</div>
<svg class="a" style="left:1282px;top:459px" width="9" height="6"><path fill="none" stroke="#555" d="M1 1l3.500 3.500L8 1"/></svg>
<div class="a" style="left:1108px;top:481px;width:86px;height:24px;border:2px solid #0078d7;background:#e1e1e1;font-size:12px;line-height:20px;text-align:center;color:#111">打开(O)</div>
<div class="a" style="left:1208px;top:481px;width:86px;height:24px;border:1px solid #adadad;background:#e1e1e1;font-size:12px;line-height:22px;text-align:center;color:#111">取消</div>
<svg class="a" style="left:1303px;top:509px" width="8" height="8"><path fill="#a9a9a9" d="M6 0h2v2H6zM3 3h2v2H3zM6 3h2v2H6zM0 6h2v2H0zM3 6h2v2H3zM6 6h2v2H6z"/></svg>
</div></div>

<!-- IME bar -->
<div class="a" style="left:1743px;top:924px;width:177px;height:24px;background:#232323;border-radius:3px 0 0 0;z-index:8"></div>
<div class="a" style="left:1721px;top:923px;width:28px;height:24px;background:#e8622a;border-radius:4px;transform:rotate(-14deg);color:#fff;font-size:23px;font-weight:700;line-height:24px;text-align:center;z-index:9">S</div>
<div class="a" style="left:1756px;top:926px;font-size:14px;font-weight:700;line-height:20px;color:#fff;z-index:9">中</div>
<div class="a" style="left:1781px;top:925px;font-size:13px;font-weight:700;line-height:20px;color:#fff;z-index:9">°,</div>
<svg class="a" style="left:1805px;top:927px;z-index:9" width="12" height="18" viewBox="0 0 12 18"><rect x="3" y="0" width="6" height="11" rx="3" fill="#fff"/><path fill="none" stroke="#fff" stroke-width="1.300" d="M1 7q0 6 5 6t5-6M6 13v4"/></svg>
<svg class="a" style="left:1828px;top:931px;z-index:9" width="15" height="12" viewBox="0 0 15 12"><rect width="15" height="12" rx="1.500" fill="#fff"/><path stroke="#232323" stroke-dasharray="1.500 1.500" d="M2 3h11M2 6h11"/><path stroke="#232323" d="M4 9h7"/></svg>
<svg class="a" style="left:1852px;top:929px;z-index:9" width="16" height="15" viewBox="0 0 16 15"><path fill="#fff" d="M4 0h2q2 2 4 0h2l4 3-2 3-2-1v10H4V5L2 6 0 3z"/></svg>
<svg class="a" style="left:1877px;top:930px;z-index:9" width="13" height="13" viewBox="0 0 13 13"><path fill="#fff" d="M0 2a2 2 0 0 1 2-2h1a2 2 0 0 1 2 2v1a2 2 0 0 1-2 2H2a2 2 0 0 1-2-2zM8 2a2 2 0 0 1 2-2h1a2 2 0 0 1 2 2v1a2 2 0 0 1-2 2h-1a2 2 0 0 1-2-2zM0 10a2 2 0 0 1 2-2h1a2 2 0 0 1 2 2v1a2 2 0 0 1-2 2H2a2 2 0 0 1-2-2zM8 10a2 2 0 0 1 2-2h1a2 2 0 0 1 2 2v1a2 2 0 0 1-2 2h-1a2 2 0 0 1-2-2z"/></svg>
<svg class="a" style="left:1897px;top:927px;z-index:9" width="21" height="20" viewBox="0 0 21 20"><circle cx="10" cy="10" r="10" fill="#f5efe6"/><path fill="#d9572b" d="M3 8h14v4H3z"/><circle cx="7" cy="10" r="1.300" fill="#333"/><circle cx="13" cy="10" r="1.300" fill="#333"/><path fill="#e8c43a" d="M17 2l3 2-2 2z"/></svg>
</div>
</body></html>
